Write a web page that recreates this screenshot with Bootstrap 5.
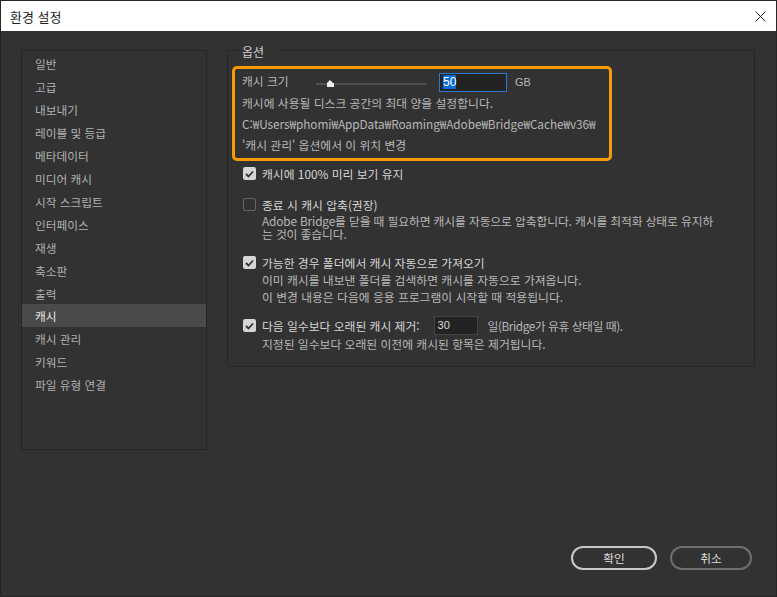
<!DOCTYPE html>
<html lang="ko">
<head>
<meta charset="utf-8">
<title>환경 설정</title>
<link href="https://cdn.jsdelivr.net/npm/bootstrap@5.3.0/dist/css/bootstrap.min.css" rel="stylesheet">
<style>
html,body{height:100%;}
body{background:#323232;color:#b8b8b8;font-family:"Noto Sans CJK KR","Liberation Sans",sans-serif;font-size:11.8px;line-height:15px;overflow:hidden;}
.win{width:777px;height:597px;border:1px solid #262626;}
.ttl{height:30px;background:#fff;color:#222;font-size:13px;padding:0 10px 0 9px;}
.bodyarea{height:515px;padding:19px 21px 0 20px;gap:20px;}
.side{width:186px;height:400px;border:1px solid #262626;border-radius:0;padding:1px 0 0 0;}
.side .list-group-item{background:transparent;border:0;border-radius:0;color:#b0b0b0;height:23px;line-height:24px;padding:0 0 0 13px;font-size:11.7px;}
.side .list-group-item.active{background:#4a4a4a;color:#e8e8e8;}
.panel{width:528px;height:317px;border:1px solid #262626;padding:15px 4px 0 4px;position:relative;}
.legend{position:absolute;left:10px;top:-6px;background:#323232;padding:0 18px 0 4px;color:#cfcfcf;font-size:12px;line-height:14px;}
.hilite{width:380px;height:95px;border:3px solid #f79a05;border-radius:5px;padding:2px 7px 0 7px;}
.rw1{height:22px;}
.lab{width:74px;line-height:20px;margin-top:-2px;}
.trk{width:111px;height:2px;background:#4f4f4f;position:relative;margin:3px 12px 0 0;}
.thumb{position:absolute;left:11px;top:-3px;width:0;height:0;border-left:3.5px solid transparent;border-right:3.5px solid transparent;border-bottom:3px solid #eee;}
.thumb::after{content:"";position:absolute;left:-3.5px;top:3px;width:7px;height:4px;background:#eee;}
.num{width:68px;height:19px;background:#232323;border:1px solid #2f78d0;color:#eee;padding:0 3px;margin-right:8px;line-height:16px;font-family:"Liberation Sans",sans-serif;font-size:12px;}
.num span{background:#0a6cd6;color:#fff;}
.gb{font-family:"Liberation Sans",sans-serif;font-size:11px;}
.ln{height:21px;line-height:20px;white-space:nowrap;}
.pth{letter-spacing:-.06px;}
.optgroup{padding:0 0 0 11px;}
.opt{gap:6px;}
.box{width:13px;height:13px;border-radius:2px;background:#d6d6d6;flex:none;margin-top:1px;display:flex;align-items:center;justify-content:center;}
.box.off{background:transparent;border:1px solid #666;}
.box.low{margin-top:3px;}
.head{color:#d6d6d6;line-height:15px;}
.sub{line-height:13px;margin-top:2px;letter-spacing:-.13px;white-space:nowrap;}
.sub2{line-height:17px;}
.o1{margin-top:5px;}
.o2{margin-top:16px;}
.o3{margin-top:14px;}
.o3 .head{line-height:17px;}
.o3 .box{margin-top:2px;}
.o4{margin-top:11px;}
.days{width:44px;height:19px;background:#232323;border:1px solid #444;color:#ddd;padding:0 3px;margin:0 10px 0 14px;line-height:17px;font-family:"Liberation Sans",sans-serif;font-size:11px;}
.tail{letter-spacing:-.45px;}
.foot{padding:0 24px 0 0;gap:13px;}
.pill{height:24px;border-radius:12px;background:transparent;color:#ddd;font-size:11.7px;padding:0;line-height:20px;}
.pill.ok{width:86px;border:2px solid #c8c8c8;}
.pill.no{width:82px;border:2px solid #6f6f6f;}
</style>
</head>
<body class="m-0">
<div class="win d-flex flex-column">
  <div class="ttl d-flex align-items-center justify-content-between">
    <span>환경 설정</span>
    <svg width="11" height="11" viewBox="0 0 11 11"><path d="M.5.5l10 10M10.500.5l-10 10" stroke="#222" fill="none"/></svg>
  </div>
  <div class="bodyarea d-flex">
    <div class="side list-group">
      <div class="list-group-item">일반</div>
      <div class="list-group-item">고급</div>
      <div class="list-group-item">내보내기</div>
      <div class="list-group-item">레이블 및 등급</div>
      <div class="list-group-item">메타데이터</div>
      <div class="list-group-item">미디어 캐시</div>
      <div class="list-group-item">시작 스크립트</div>
      <div class="list-group-item">인터페이스</div>
      <div class="list-group-item">재생</div>
      <div class="list-group-item">축소판</div>
      <div class="list-group-item">출력</div>
      <div class="list-group-item active">캐시</div>
      <div class="list-group-item">캐시 관리</div>
      <div class="list-group-item">키워드</div>
      <div class="list-group-item">파일 유형 연결</div>
    </div>
    <div class="panel">
      <div class="legend">옵션</div>
      <div class="hilite">
        <div class="rw1 d-flex align-items-center">
          <span class="lab">캐시 크기</span>
          <div class="trk"><div class="thumb"></div></div>
          <div class="num"><span>50</span></div>
          <span class="gb">GB</span>
        </div>
        <div class="ln">캐시에 사용될 디스크 공간의 최대 양을 설정합니다.</div>
        <div class="ln pth">C:₩Users₩phomi₩AppData₩Roaming₩Adobe₩Bridge₩Cache₩v36₩</div>
        <div class="ln">'캐시 관리' 옵션에서 이 위치 변경</div>
      </div>
      <div class="optgroup">
        <div class="opt o1 d-flex">
          <div class="box"><svg width="9" height="8" viewBox="0 0 9 8"><path d="M1 4l2.500 2.500L8 1.500" stroke="#333" stroke-width="1.800" fill="none"/></svg></div>
          <div class="head">캐시에 100% 미리 보기 유지</div>
        </div>
        <div class="opt o2 d-flex">
          <div class="box off"></div>
          <div>
            <div class="head">종료 시 캐시 압축(권장)</div>
            <div class="sub">Adobe Bridge를 닫을 때 필요하면 캐시를 자동으로 압축합니다. 캐시를 최적화 상태로 유지하<br>는 것이 좋습니다.</div>
          </div>
        </div>
        <div class="opt o3 d-flex">
          <div class="box"><svg width="9" height="8" viewBox="0 0 9 8"><path d="M1 4l2.500 2.500L8 1.500" stroke="#333" stroke-width="1.800" fill="none"/></svg></div>
          <div>
            <div class="head">가능한 경우 폴더에서 캐시 자동으로 가져오기</div>
            <div class="sub2">이미 캐시를 내보낸 폴더를 검색하면 캐시를 자동으로 가져옵니다.<br>이 변경 내용은 다음에 응용 프로그램이 시작할 때 적용됩니다.</div>
          </div>
        </div>
        <div class="opt o4 d-flex">
          <div class="box low"><svg width="9" height="8" viewBox="0 0 9 8"><path d="M1 4l2.500 2.500L8 1.500" stroke="#333" stroke-width="1.800" fill="none"/></svg></div>
          <div>
            <div class="d-flex align-items-center">
              <span class="head">다음 일수보다 오래된 캐시 제거:</span>
              <div class="days">30</div>
              <span class="tail">일(Bridge가 유휴 상태일 때).</span>
            </div>
            <div class="sub2">지정된 일수보다 오래된 이전에 캐시된 항목은 제거됩니다.</div>
          </div>
        </div>
      </div>
    </div>
  </div>
  <div class="foot d-flex justify-content-end">
    <button class="btn pill ok">확인</button>
    <button class="btn pill no">취소</button>
  </div>
</div>
<script src="https://cdn.jsdelivr.net/npm/bootstrap@5.3.0/dist/js/bootstrap.bundle.min.js"></script>
</body>
</html>
